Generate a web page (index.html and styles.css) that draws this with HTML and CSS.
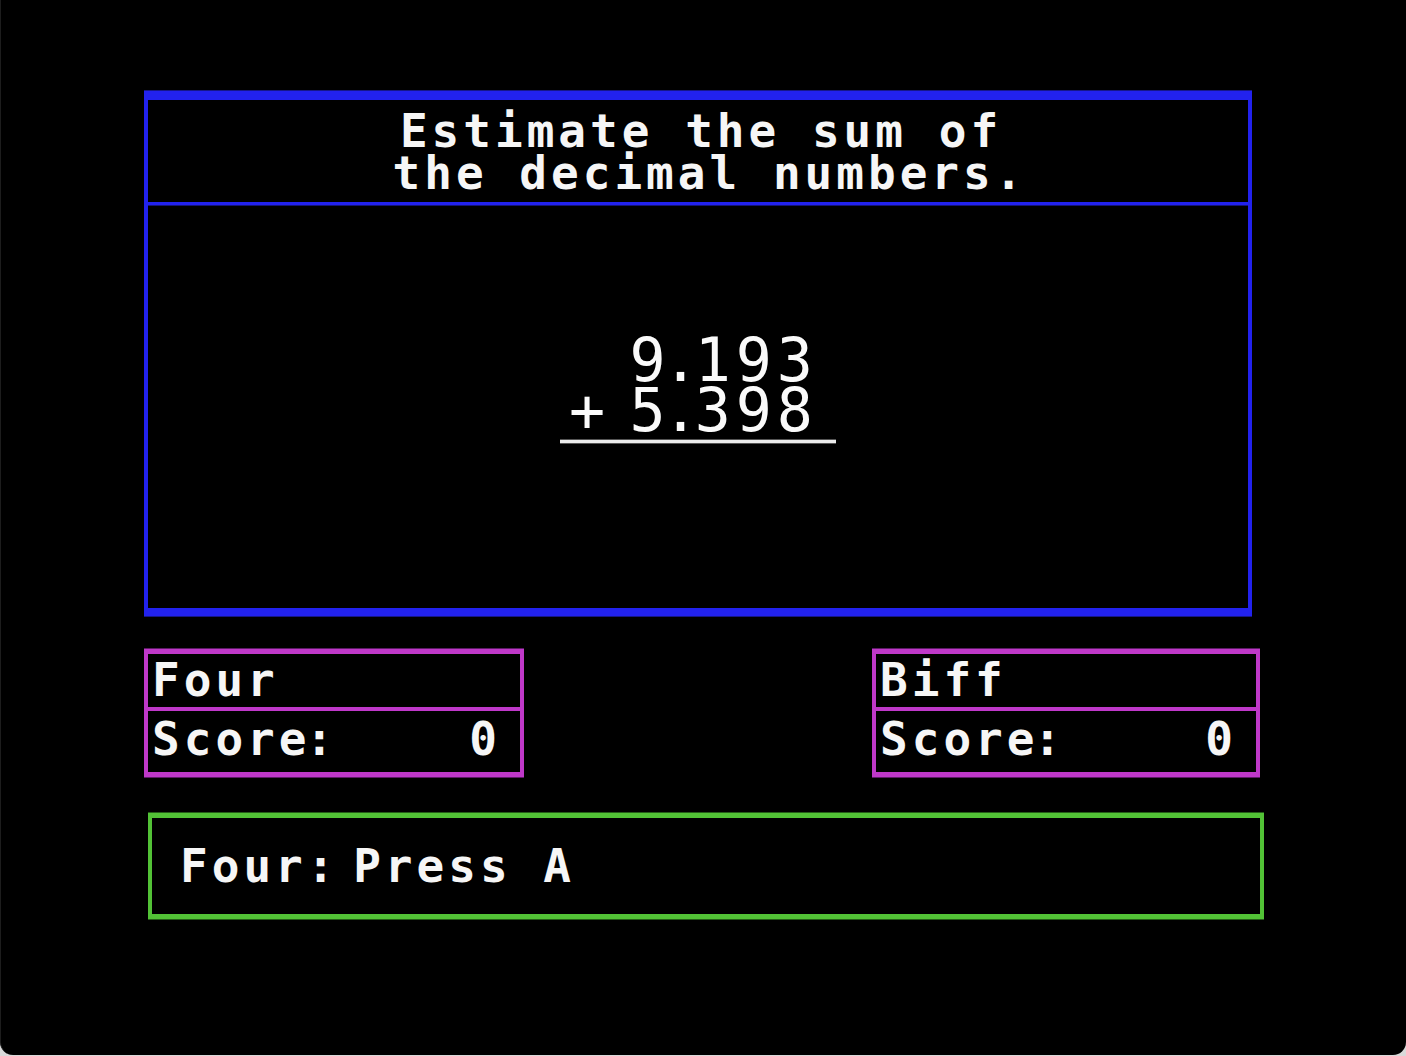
FILE: index.html
```html
<!DOCTYPE html>
<html lang="en">
<head>
<meta charset="utf-8">
<title>Estimate the Sum</title>
<link rel="stylesheet" href="styles.css">
</head>
<body>
<main class="screen">
  <section class="board">
    <header class="prompt">
      <span class="prompt-line">Estimate the sum of</span>
      <span class="prompt-line">the decimal numbers<span class="narrow">.</span></span>
    </header>
    <div class="problem">
      <div class="sum">
        <div class="sum-row"><span class="num"><span class="pre-dot">9</span><span class="dot">.</span>193</span></div>
        <div class="sum-row"><span class="op">+</span><span class="num"><span class="pre-dot">5</span><span class="dot">.</span>398</span></div>
        <div class="sum-rule"></div>
      </div>
    </div>
  </section>

  <section class="players">
    <div class="player player-left">
      <div class="player-name">Four</div>
      <div class="player-score"><span>Scor<span class="pre-colon">e</span><span class="narrow">:</span></span><span class="points">0</span></div>
    </div>
    <div class="player player-right">
      <div class="player-name">Biff</div>
      <div class="player-score"><span>Scor<span class="pre-colon">e</span><span class="narrow">:</span></span><span class="points">0</span></div>
    </div>
  </section>

  <section class="status">
    <p class="status-text">Four<span class="narrow">:</span> Press A</p>
  </section>
</main>
</body>
</html>
```

FILE: styles.css
```css
html, body {
  margin: 0;
  padding: 0;
}

body {
  background: #d9d9d9;
  width: 1406px;
  height: 1056px;
}

.screen {
  box-sizing: border-box;
  width: 1406px;
  height: 1055px;
  background: #000;
  border-left: 1px solid #1d1d1d;
  border-radius: 0 0 13px 13px;
  padding: 91px 0 0 143px;
  color: #f6f6f6;
  font-family: "DejaVu Sans Mono", "Liberation Mono", monospace;
  font-weight: bold;
  font-size: 46px;
  line-height: 42px;
  letter-spacing: 4px;
}

/* punctuation in the bitmap font sits in a half-width cell */
.narrow {
  letter-spacing: -13px;
}

.pre-colon {
  letter-spacing: -1px;
}

/* main question board */
.board {
  box-sizing: border-box;
  width: 1108px;
  border-style: solid;
  border-color: #2222ee;
  border-width: 9px 4px 8px 4px;
  box-shadow: 0 -1px 0 #16168a, 0 1px 0 #16168a;
}

.prompt {
  display: flex;
  flex-direction: column;
  align-items: center;
  padding: 10px 0 8px 6px;
  border-bottom: 3px solid #2222ee;
  box-shadow: 0 1px 0 #14147a;
}

.prompt-line {
  display: block;
  white-space: pre;
}

.problem {
  height: 403px;
  display: flex;
  justify-content: center;
}

.sum {
  width: 276px;
  margin-top: 130px;
  font-weight: normal;
  font-size: 60px;
  line-height: 50px;
  letter-spacing: 5px;
  color: #fafafa;
}

.sum-row {
  display: flex;
  justify-content: flex-end;
  padding: 0 18px 0 9px;
  white-space: pre;
}

.sum-row .op {
  margin-right: auto;
  letter-spacing: 0;
}

.sum-row .pre-dot {
  letter-spacing: -3px;
}

.sum-row .dot {
  letter-spacing: -4px;
}

.sum-rule {
  height: 3px;
  margin-top: 5px;
  background: #ececec;
  box-shadow: 0 -1px 0 #555, 0 1px 0 #555;
}

/* player score cards */
.players {
  display: flex;
  justify-content: space-between;
  width: 1116px;
  margin-top: 33px;
}

.player {
  box-sizing: border-box;
  height: 128px;
  border-style: solid;
  border-color: #bf38c9;
  border-width: 5px 4px 5px 4px;
  box-shadow: 0 -1px 0 #5e1a66, 0 1px 0 #5e1a66;
}

.player-left {
  width: 380px;
}

.player-right {
  width: 388px;
}

.player-name {
  height: 57px;
  box-sizing: border-box;
  padding: 5px 0 0 4px;
  border-bottom: 4px solid #bf38c9;
}

.player-score {
  display: flex;
  justify-content: space-between;
  padding: 7px 19px 0 4px;
}

/* turn status bar */
.status {
  box-sizing: border-box;
  width: 1116px;
  height: 106px;
  margin: 36px 0 0 4px;
  border-style: solid;
  border-color: #52c236;
  border-width: 5px 4px 5px 4px;
  box-shadow: 0 -1px 0 #255e18, 0 1px 0 #255e18;
}

.status-text {
  margin: 0;
  padding: 27px 0 0 28px;
  white-space: pre;
}
```
